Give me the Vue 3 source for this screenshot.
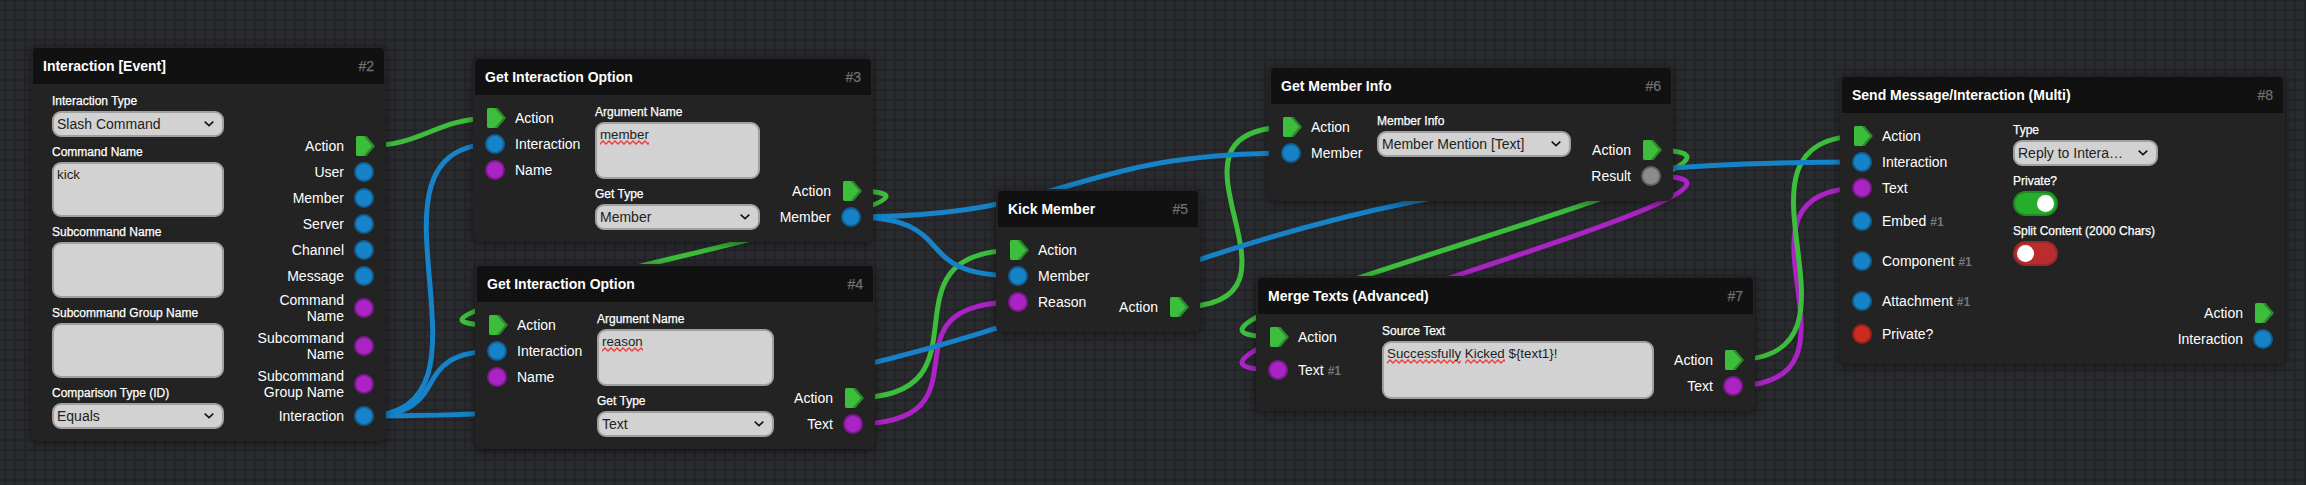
<script setup>
const action = (label = 'Action') => ({ label, type: 'action' })
const port = (label, type, index) => ({ label, type, index })

const nodes = [
  {
    id: 2, title: 'Interaction [Event]', x: 31, y: 46, w: 355, h: 395, inW: 9, ctlW: 172,
    inputs: [],
    fields: [
      { label: 'Interaction Type', kind: 'select', value: 'Slash Command' },
      { label: 'Command Name', kind: 'area', words: ['kick'], h: 55.33 },
      { label: 'Subcommand Name', kind: 'area', words: [], h: 55.33 },
      { label: 'Subcommand Group Name', kind: 'area', words: [], h: 55.33 },
      { label: 'Comparison Type (ID)', kind: 'select', value: 'Equals' },
    ],
    outputs: [
      action(), port('User', 'object'), port('Member', 'object'), port('Server', 'object'),
      port('Channel', 'object'), port('Message', 'object'), port('Command Name', 'text'),
      port('Subcommand Name', 'text'), port('Subcommand Group Name', 'text'), port('Interaction', 'object'),
    ],
  },
  {
    id: 3, title: 'Get Interaction Option', x: 473, y: 57, w: 400, h: 185, inW: 110, ctlW: 165,
    inputs: [action(), port('Interaction', 'object'), port('Name', 'text')],
    fields: [
      { label: 'Argument Name', kind: 'area', words: ['~member'], h: 57 },
      { label: 'Get Type', kind: 'select', value: 'Member' },
    ],
    outputs: [action(), port('Member', 'object')],
  },
  {
    id: 4, title: 'Get Interaction Option', x: 475, y: 264, w: 400, h: 185, inW: 110, ctlW: 177,
    inputs: [action(), port('Interaction', 'object'), port('Name', 'text')],
    fields: [
      { label: 'Argument Name', kind: 'area', words: ['~reason'], h: 57 },
      { label: 'Get Type', kind: 'select', value: 'Text' },
    ],
    outputs: [action(), port('Text', 'text')],
  },
  {
    id: 5, title: 'Kick Member', x: 996, y: 189, w: 204, h: 143, inW: 90, ctlW: 0,
    inputs: [action(), port('Member', 'object'), port('Reason', 'text')],
    fields: [],
    outputs: [action()],
  },
  {
    id: 6, title: 'Get Member Info', x: 1269, y: 66, w: 404, h: 135, inW: 96, ctlW: 194,
    inputs: [action(), port('Member', 'object')],
    fields: [{ label: 'Member Info', kind: 'select', value: 'Member Mention [Text]' }],
    outputs: [action(), port('Result', 'any')],
  },
  {
    id: 7, title: 'Merge Texts (Advanced)', x: 1256, y: 276, w: 499, h: 135, inW: 114, ctlW: 272,
    inputs: [action(), port('Text', 'text', '#1')],
    fields: [{ label: 'Source Text', kind: 'area', words: ['~Successfully', '~Kicked', '${text1}!'], h: 58 }],
    outputs: [action(), port('Text', 'text')],
  },
  {
    id: 8, title: 'Send Message/Interaction (Multi)', x: 1840, y: 75, w: 445, h: 289, inW: 161, ctlW: 145,
    inputs: [
      action(), port('Interaction', 'object'), port('Text', 'text'), port('Embed', 'object', '#1'),
      port('Component', 'object', '#1'), port('Attachment', 'object', '#1'), port('Private?', 'bool'),
    ],
    fields: [
      { label: 'Type', kind: 'select', value: 'Reply to Intera…' },
      { label: 'Private?', kind: 'toggle', on: true },
      { label: 'Split Content (2000 Chars)', kind: 'toggle', on: false },
    ],
    outputs: [action(), port('Interaction', 'object')],
  },
]

// x1, y1, x2, y2, horizontal pull of the control points
const wires = [
  ['text', 853, 424, 1018, 302, 149],
  ['text', 1651, 176, 1278, 370, 211],
  ['text', 1733, 386, 1862, 188, 155],
  ['action', 364, 146, 495, 118, 62],
  ['action', 851, 191, 497, 325, 204],
  ['action', 853, 398, 1018, 250, 148],
  ['action', 1178, 307, 1291, 127, 156],
  ['action', 1651, 150, 1278, 337, 211],
  ['action', 1733, 360, 1862, 136, 157],
  ['object', 364, 416, 495, 144, 155],
  ['object', 364, 416, 497, 351, 95],
  ['object', 364, 416, 1862, 162, 765],
  ['object', 851, 217, 1018, 276, 114],
  ['object', 851, 217, 1291, 153, 222],
].map(([type, x1, y1, x2, y2, h]) => ({
  type,
  d: `M${x1} ${y1} C${x1 + h} ${y1} ${x2 - h} ${y2} ${x2} ${y2}`,
}))

const place = (n) => ({ left: n.x + 'px', top: n.y + 'px', width: n.w + 'px', height: n.h + 'px' })
const columns = (n) => ({ gridTemplateColumns: `${n.inW}px ${n.ctlW}px 1fr` })
</script>

<template>
  <main class="canvas">
    <svg class="wires" width="2306" height="485" viewBox="0 0 2306 485">
      <path v-for="(w, i) in wires" :key="i" :class="'wire-' + w.type" :d="w.d" />
    </svg>

    <section v-for="n in nodes" :key="n.id" class="node" :style="place(n)">
      <header class="head">
        <span class="title">{{ n.title }}</span>
        <span class="num">#{{ n.id }}</span>
      </header>
      <div class="body" :style="columns(n)">
        <div class="inputs">
          <div v-for="(p, i) in n.inputs" :key="i" class="port" :class="{ multi: p.index }">
            <svg v-if="p.type === 'action'" class="arrow" width="20" height="20" viewBox="0 0 20 20">
              <path class="arrow-edge" d="M4 0H12.5L21 10L12.5 20H4Q2 20 2 18V2Q2 0 4 0Z" />
              <path class="arrow-fill" d="M4 0H9.5L18 10L9.5 20H4Q2 20 2 18V2Q2 0 4 0Z" />
            </svg>
            <i v-else class="socket" :class="p.type"></i>
            <span class="name">{{ p.label }}<small v-if="p.index">{{ p.index }}</small></span>
          </div>
        </div>
        <div class="fields">
          <div v-for="f in n.fields" :key="f.label" class="field">
            <label>{{ f.label }}</label>
            <div v-if="f.kind === 'select'" class="select">
              <span>{{ f.value }}</span>
              <svg width="10" height="6" viewBox="0 0 10 6"><path d="M0.7 0.7L5 4.7L9.3 0.7" /></svg>
            </div>
            <div v-else-if="f.kind === 'area'" class="area" :style="{ height: f.h + 'px' }">
              <template v-for="(t, i) in f.words" :key="i">
                <span :class="{ typo: t[0] === '~' }">{{ t.replace('~', '') }}</span>{{ ' ' }}
              </template>
            </div>
            <div v-else class="toggle" :class="{ on: f.on }"><i></i></div>
          </div>
        </div>
        <div class="outputs">
          <div v-for="(p, i) in n.outputs" :key="i" class="port">
            <span class="name">{{ p.label }}</span>
            <svg v-if="p.type === 'action'" class="arrow" width="20" height="20" viewBox="0 0 20 20">
              <path class="arrow-edge" d="M4 0H12.5L21 10L12.5 20H4Q2 20 2 18V2Q2 0 4 0Z" />
              <path class="arrow-fill" d="M4 0H9.5L18 10L9.5 20H4Q2 20 2 18V2Q2 0 4 0Z" />
            </svg>
            <i v-else class="socket" :class="p.type"></i>
          </div>
        </div>
      </div>
    </section>
  </main>
</template>

<style>
body {
  overflow: hidden;
  background: #222326;
}
</style>

<style scoped>
.canvas {
  position: relative;
  width: 2306px;
  height: 485px;
  overflow: hidden;
  background-color: #2a2b2f;
  background-image:
    linear-gradient(to right, #232427 2px, transparent 2px),
    linear-gradient(to bottom, #232427 2px, transparent 2px);
  background-size: 10px 10px;
  background-position: 4px 9px;
  font-family: "Liberation Sans", Arial, sans-serif;
  font-size: 14px;
  color: #fff;
}
.wires {
  position: absolute;
  inset: 0;
}
.wires path {
  fill: none;
  stroke-width: 5;
}
.wires .wire-action { stroke: #3cbd3c; }
.wires .wire-object { stroke: #1682c8; }
.wires .wire-text { stroke: #ab23c4; }

.node {
  position: absolute;
  box-sizing: border-box;
  display: flex;
  flex-direction: column;
  border: 2px solid #232323;
  border-radius: 6px;
  background: #232323;
  box-shadow: 0 2px 8px rgba(0, 0, 0, 0.5);
}
.head {
  flex: none;
  height: 36px;
  display: flex;
  align-items: center;
  justify-content: space-between;
  padding: 0 10px;
  border-radius: 4px 4px 0 0;
  background: #111;
  line-height: 16px;
}
.title { font-weight: bold; }
.num {
  color: #707070;
  -webkit-text-stroke: 0.25px #707070;
}

.body {
  flex: 1;
  display: grid;
  padding: 10px;
}
.inputs,
.outputs {
  display: flex;
  flex-direction: column;
}
.outputs { justify-content: flex-end; }
.outputs .port { justify-content: flex-end; }
.outputs .name {
  max-width: 90px;
  text-align: right;
}
.port {
  display: flex;
  align-items: center;
  gap: 10px;
  min-height: 20px;
  margin: 3px 0;
  line-height: 16px;
}
.inputs .port { white-space: nowrap; }
.inputs .multi { min-height: 34px; }
.name small {
  margin-left: 4px;
  font-size: 12px;
  font-weight: bold;
  color: #777;
}
.arrow {
  flex: none;
  overflow: visible;
}
.arrow-edge { fill: #2c8a2c; }
.arrow-fill { fill: #3cbd3c; }
.socket {
  flex: none;
  box-sizing: border-box;
  width: 20px;
  height: 20px;
  border: 2px solid;
  border-radius: 50%;
}
.object { background: #1682c8; border-color: #125f91; }
.text { background: #ab23c4; border-color: #7b1c8d; }
.bool { background: #cb2b1d; border-color: #93231a; }
.any { background: #8b8b8b; border-color: #626262; }

.field + .field { margin-top: 8px; }
.field label {
  display: block;
  height: 17px;
  font-size: 12px;
  line-height: 14px;
  white-space: nowrap;
  -webkit-text-stroke: 0.25px #fff;
}
.select,
.area {
  box-sizing: border-box;
  border: 2px solid #a0a0a0;
  border-radius: 9px;
  background: #d2d2d2;
  color: #222;
}
.select {
  height: 26px;
  display: flex;
  align-items: center;
  justify-content: space-between;
  padding: 0 8px 0 3px;
  white-space: nowrap;
}
.select path {
  fill: none;
  stroke: #111;
  stroke-width: 1.6;
}
.area {
  padding: 3px;
  font-size: 13.333px;
  line-height: 15px;
}
.typo {
  padding-bottom: 3px;
  background: url("data:image/svg+xml,%3Csvg xmlns='http://www.w3.org/2000/svg' width='6' height='5'%3E%3Cpath d='M-3 1L0 4L3 1L6 4L9 1' fill='none' stroke='%23f03c3c' stroke-width='1.4'/%3E%3C/svg%3E") 0 100% repeat-x;
}
.toggle {
  box-sizing: border-box;
  width: 45px;
  height: 25px;
  display: flex;
  align-items: center;
  padding: 0 2px;
  border: 2px solid #952929;
  border-radius: 13px;
  background: #b92d2d;
}
.toggle i {
  width: 17px;
  height: 17px;
  border-radius: 50%;
  background: #fff;
}
.toggle.on {
  justify-content: flex-end;
  border-color: #1f8a22;
  background: #28ac2c;
}
</style>
